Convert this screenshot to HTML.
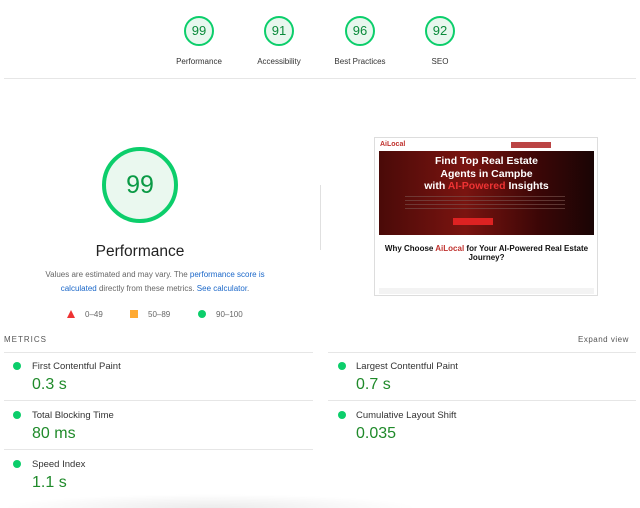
<!DOCTYPE html>
<html><head><style>
body{margin:0;width:640px;height:504px;background:#fff;font-family:"Liberation Sans",sans-serif;position:relative;overflow:hidden;color:#212121}
.a{position:absolute}
.g{position:absolute;width:30px;height:30px;border-radius:50%;background:#e8f7ee;border:2px solid #0cce6b;box-sizing:border-box;color:#0a8a3a;font-size:13px;text-align:center;line-height:26px}
.gl{position:absolute;font-size:8px;color:#333;width:90px;text-align:center}
.dot{position:absolute;width:8px;height:8px;border-radius:50%;background:#0cce6b}
.ml{position:absolute;font-size:9.5px;color:#333}
.mv{position:absolute;font-size:16px;color:#1f8a2a}
.hl{position:absolute;height:1px;background:#e6e6e6}
</style></head><body>
<div class="g" style="left:184px;top:16px">99</div>
<div class="g" style="left:264px;top:16px">91</div>
<div class="g" style="left:345px;top:16px">96</div>
<div class="g" style="left:425px;top:16px">92</div>
<div class="gl" style="left:154px;top:57px">Performance</div>
<div class="gl" style="left:234px;top:57px">Accessibility</div>
<div class="gl" style="left:315px;top:57px">Best Practices</div>
<div class="gl" style="left:395px;top:57px">SEO</div>
<div class="hl" style="left:4px;width:632px;top:78px"></div>

<div class="a" style="left:102px;top:147px;width:76px;height:76px;border-radius:50%;background:#eaf8ef;border:4px solid #0cce6b;box-sizing:border-box;color:#0a9a45;font-size:25px;text-align:center;line-height:68px">99</div>
<div class="a" style="left:40px;top:243px;width:200px;text-align:center;font-size:15.5px;color:#222">Performance</div>
<div class="a" style="left:30px;top:268px;width:250px;text-align:center;font-size:8px;line-height:14px;color:#666">Values are estimated and may vary. The <span style="color:#1a67c9">performance score is calculated</span> directly from these metrics. <span style="color:#1a67c9">See calculator</span>.</div>
<div class="a" style="left:67px;top:310px;width:0;height:0;border-left:4px solid transparent;border-right:4px solid transparent;border-bottom:8px solid #e33"></div>
<div class="a" style="left:85px;top:310px;font-size:8px;color:#666">0–49</div>
<div class="a" style="left:130px;top:310px;width:8px;height:8px;background:#fa3"></div>
<div class="a" style="left:148px;top:310px;font-size:8px;color:#666">50–89</div>
<div class="dot" style="left:198px;top:310px"></div>
<div class="a" style="left:216px;top:310px;font-size:8px;color:#666">90–100</div>
<div class="a" style="left:320px;top:185px;width:1px;height:65px;background:#e0e0e0"></div>

<div class="a" style="left:374px;top:137px;width:224px;height:159px;background:#fff;border:1px solid #ddd;box-sizing:border-box;overflow:hidden">
 <div class="a" style="left:5px;top:3px;font-size:7px;font-weight:bold;color:#c0322e">AiLocal</div>
 <div class="a" style="left:136px;top:4px;width:40px;height:6px;background:#b44"></div>
 <div class="a" style="left:4px;top:13px;width:215px;height:84px;background:linear-gradient(90deg,#4a0a08,#7a1410 40%,#3a0606 75%,#1a0505)"></div>
 <div class="a" style="left:4px;top:17px;width:215px;text-align:center;color:#fff;font-size:10.5px;font-weight:bold;line-height:12.5px">Find Top Real Estate<br>Agents in Campbe<br>with <span style="color:#e33">AI-Powered</span> Insights</div>
 <div class="a" style="left:30px;top:58px;width:160px;height:16px;background:repeating-linear-gradient(#7a5550 0 1px,transparent 1px 4px);opacity:.6"></div>
 <div class="a" style="left:78px;top:80px;width:40px;height:7px;background:#d22"></div>
 <div class="a" style="left:4px;top:106px;width:215px;text-align:center;font-size:8px;font-weight:bold;line-height:9px;color:#111">Why Choose <span style="color:#c0322e">AiLocal</span> for Your AI-Powered Real Estate Journey?</div>
 <div class="a" style="left:4px;top:150px;width:215px;height:6px;background:#f3f3f3"></div>
</div>

<div class="a" style="left:4px;top:335px;font-size:8px;letter-spacing:1px;color:#555">METRICS</div>
<div class="a" style="left:578px;top:335px;font-size:8px;letter-spacing:.5px;color:#555">Expand view</div>
<div class="hl" style="left:4px;width:309px;top:352px"></div>
<div class="hl" style="left:328px;width:308px;top:352px"></div>
<div class="hl" style="left:4px;width:309px;top:400px"></div>
<div class="hl" style="left:328px;width:308px;top:400px"></div>
<div class="hl" style="left:4px;width:309px;top:449px"></div>

<div class="dot" style="left:13px;top:362px"></div><div class="ml" style="left:32px;top:361px">First Contentful Paint</div><div class="mv" style="left:32px;top:376px">0.3 s</div>
<div class="dot" style="left:13px;top:411px"></div><div class="ml" style="left:32px;top:410px">Total Blocking Time</div><div class="mv" style="left:32px;top:425px">80 ms</div>
<div class="dot" style="left:13px;top:460px"></div><div class="ml" style="left:32px;top:459px">Speed Index</div><div class="mv" style="left:32px;top:474px">1.1 s</div>
<div class="dot" style="left:338px;top:362px"></div><div class="ml" style="left:356px;top:361px">Largest Contentful Paint</div><div class="mv" style="left:356px;top:376px">0.7 s</div>
<div class="dot" style="left:338px;top:411px"></div><div class="ml" style="left:356px;top:410px">Cumulative Layout Shift</div><div class="mv" style="left:356px;top:425px">0.035</div>
<div class="a" style="left:0;top:494px;width:420px;height:14px;background:radial-gradient(ellipse at 50% 100%,rgba(0,0,0,.08),rgba(0,0,0,0) 70%)"></div>
</body></html>
